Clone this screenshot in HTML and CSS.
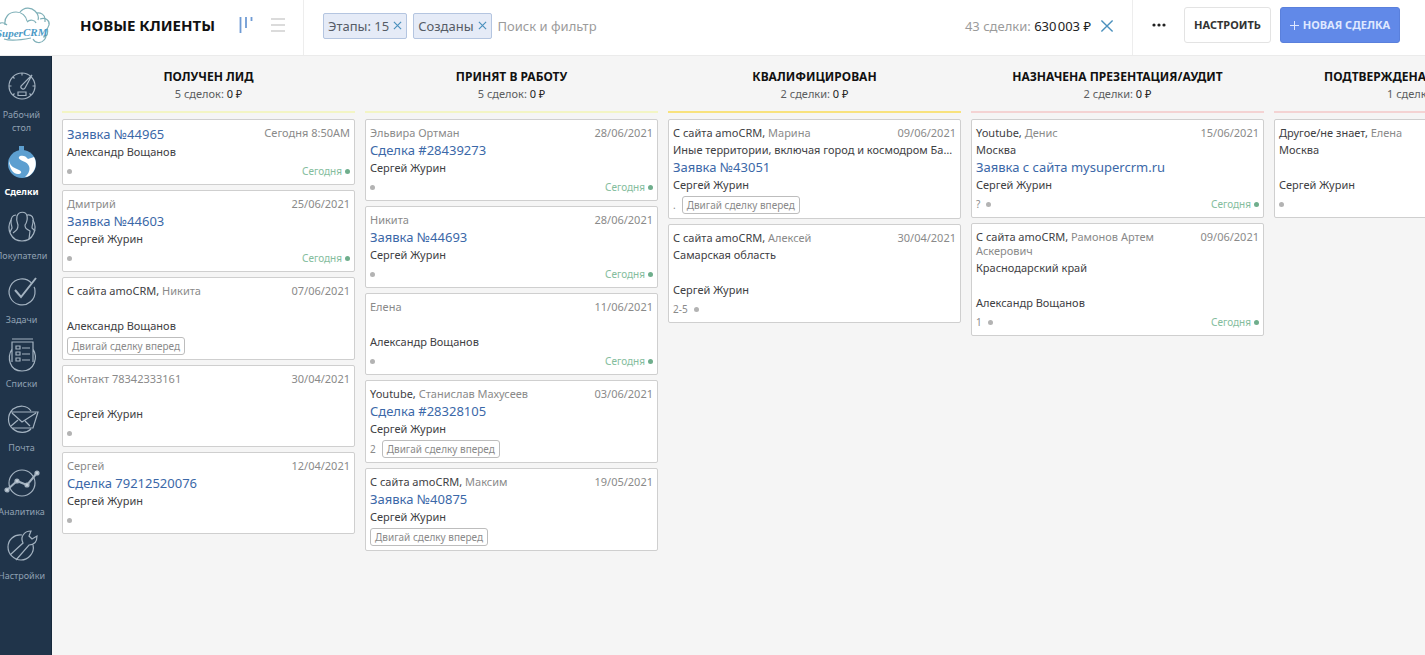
FILE: index.html
```html
<!DOCTYPE html>
<html lang="ru">
<head>
<meta charset="utf-8">
<title>Новые клиенты</title>
<link rel="stylesheet" href="styles.css">
</head>
<body>
<div class="app">
  <header class="topbar">
    <a class="logo" href="#" aria-label="Super CRM">
      <svg width="52" height="55" viewBox="0 0 52 55" fill="none" stroke-width="1.2">
        <g stroke="#7fb0b8">
          <path d="M-2 25C0 22 4 22 7 25M5 25C4 17 9 12 16 12c6 0 10 4 11 9"/>
          <path d="M20 12C24 7 31 7 35 11c3 3 4 6 3 9M36 13c5-1 9 2 9 6v3"/>
          <path d="M27 22c3-3 8-2 9 1M40 19c6-2 10 2 9 6-1 2-1 3-2 4"/>
          <path d="M47 28c2 5 0 9-4 9M33 39c2 4 8 5 11 1 3-3 2-4 1-5M4 39c6 2 17 1 27-1"/>
        </g>
        <text class="logo-text" x="-4" y="37">Super</text>
        <text class="logo-text" x="23" y="36">CRM</text>
      </svg>
    </a>
    <div class="title-area">
      <h1 class="title">НОВЫЕ КЛИЕНТЫ</h1>
      <button class="icon-btn" aria-label="Воронка">
        <svg width="14" height="16" viewBox="0 0 14 16" stroke="#6f9bd4" stroke-width="1.8"><path d="M1.500 0v16M7 0v11M12.500 0v4"/></svg>
      </button>
      <button class="icon-btn" aria-label="Список">
        <svg width="14" height="14" viewBox="0 0 14 14" stroke="#cfcfcf" stroke-width="1.4"><path d="M0 1h14M0 7h14M0 13h14"/></svg>
      </button>
    </div>
    <div class="search">
      <button class="chip">Этапы: 15<svg class="x" viewBox="0 0 10 10"><path d="M1 1l8 8M9 1L1 9"/></svg></button>
      <button class="chip">Созданы<svg class="x" viewBox="0 0 10 10"><path d="M1 1l8 8M9 1L1 9"/></svg></button>
      <input class="search-input" type="text" placeholder="Поиск и фильтр" aria-label="Поиск и фильтр">
      <span class="total">43 сделки: <b>630&#8202;003 ₽</b></span>
      <button class="icon-btn" aria-label="Сбросить"><svg class="x x-big" viewBox="0 0 10 10"><path d="M1 1l8 8M9 1L1 9"/></svg></button>
    </div>
    <div class="actions">
      <button class="icon-btn" aria-label="Ещё"><svg width="14" height="4" viewBox="0 0 14 4" fill="#222"><circle cx="2" cy="2" r="1.600"/><circle cx="7" cy="2" r="1.600"/><circle cx="12" cy="2" r="1.600"/></svg></button>
      <button class="btn">НАСТРОИТЬ</button>
      <button class="btn btn-primary"><svg width="9" height="9" viewBox="0 0 9 9" stroke="#dfe8ff"><path d="M4.500 0v9M0 4.500h9"/></svg>НОВАЯ СДЕЛКА</button>
    </div>
  </header>
  <div class="body">
    <nav class="sidebar">
      <a class="nav-item" href="#">
        <svg class="nav-icon" viewBox="0 0 36 34"><circle cx="18" cy="17" r="13"/><path d="M18 4v2.500M5 17h2.500M28.500 17H31M9 8l1.500 1.500M9 26l1.500-1.500M27 26l-1.500-1.500M28 6l-7 13c-1 2-5 1-4-2zM14 23h8v3.500h-8z"/></svg>
        <span>Рабочий<br>стол</span>
      </a>
      <a class="nav-item active" href="#">
        <svg class="nav-icon deals" viewBox="0 0 36 34"><path class="f-blue" d="M15 0h5v5h-5z"/><circle class="f-blue" cx="18" cy="18" r="14"/><path class="f-white" d="M30 11c3 5 2 11-1 15-2 3-5 5-8 5 6-5 6-12 0-15-5-2-8-4-5-6 3-1 6 0 8 3zM5 14c1 7 6 8 10 10 4 2 2 4-1 4-5 0-9-6-9-14z"/></svg>
        <span>Сделки</span>
      </a>
      <a class="nav-item" href="#">
        <svg class="nav-icon" viewBox="0 0 36 34"><path d="M13 6c2-5 9-5 10 0 1 4 0 6-2 9 0 3 1 4 5 6l-1 8M13 6c-1 4 0 6 1 9 0 4-1 5-5 8M12 5C8 5 7 9 7 12c0 3 1 4 1 6l-2 4M23 5c5-1 7 3 6 7 0 2-1 3-1 6l3 3"/><path d="M7 10c-5 9 0 21 11 21s16-12 11-21"/></svg>
        <span>Покупатели</span>
      </a>
      <a class="nav-item" href="#">
        <svg class="nav-icon" viewBox="0 0 36 34"><path d="M27.500 9A13 13 0 1 0 31 17c0-2 0-3-1-4"/><path class="thick" d="M11 16l6 7L32 4"/></svg>
        <span>Задачи</span>
      </a>
      <a class="nav-item" href="#">
        <svg class="nav-icon" viewBox="0 0 36 34"><path d="M8 1h21M8 24V4h21v20M8 11c-5 8-3 22 10 22s16-14 11-22M12 8h4v3h-4zM12 14h4v3h-4zM12 20h4v3h-4zM18 10h8M18 16h8M18 22h8"/></svg>
        <span>Списки</span>
      </a>
      <a class="nav-item" href="#">
        <svg class="nav-icon" viewBox="0 0 36 34"><path d="M27 9C23 3 15 3 9 7 3 13 3 22 9 27c6 5 14 4 18 0M6 10h28l-5 16H8M8 11l10 9 14-9M14 18l-7 6M21 19l5 5"/></svg>
        <span>Почта</span>
      </a>
      <a class="nav-item" href="#">
        <svg class="nav-icon" viewBox="0 0 36 34"><circle cx="18" cy="17" r="13"/><path class="thick" d="M3 24l10-9 10 4L33 7"/><g class="dots"><circle cx="3" cy="24" r="2"/><circle cx="13" cy="15" r="2"/><circle cx="23" cy="19" r="2"/><circle cx="33" cy="7" r="2"/></g></svg>
        <span>Аналитика</span>
      </a>
      <a class="nav-item" href="#">
        <svg class="nav-icon" viewBox="0 0 36 34"><path d="M18 5C10 4 4 10 4 17s6 13 13 13 14-7 12-15"/><path d="M6 25l13-12c-3-6 1-12 8-12l-2 5 3 3 5-3c0 6-3 9-8 9L12 30"/></svg>
        <span>Настройки</span>
      </a>
    </nav>
    <main class="board">
      <section class="column">
        <header class="col-head lime"><h2>ПОЛУЧЕН ЛИД</h2><p>5 сделок: <b>0 ₽</b></p></header>
        <article class="card">
          <div class="row"><a class="deal" href="#">Заявка №44965</a><time>Сегодня 8:50AM</time></div>
          <div class="person">Александр Вощанов</div>
          <footer><i class="dot"></i><span class="today">Сегодня</span></footer>
        </article>
        <article class="card">
          <div class="row"><span class="contact">Дмитрий</span><time>25/06/2021</time></div>
          <a class="deal" href="#">Заявка №44603</a>
          <div class="person">Сергей Журин</div>
          <footer><i class="dot"></i><span class="today">Сегодня</span></footer>
        </article>
        <article class="card">
          <div class="row"><span class="contact"><b>С сайта amoCRM,</b> Никита</span><time>07/06/2021</time></div>
          <div class="deal"></div>
          <div class="person">Александр Вощанов</div>
          <footer class="tagged"><span class="tag">Двигай сделку вперед</span></footer>
        </article>
        <article class="card">
          <div class="row"><span class="contact">Контакт 78342333161</span><time>30/04/2021</time></div>
          <div class="deal"></div>
          <div class="person">Сергей Журин</div>
          <footer><i class="dot"></i></footer>
        </article>
        <article class="card">
          <div class="row"><span class="contact">Сергей</span><time>12/04/2021</time></div>
          <a class="deal" href="#">Сделка 79212520076</a>
          <div class="person">Сергей Журин</div>
          <footer><i class="dot"></i></footer>
        </article>
      </section>
      <section class="column">
        <header class="col-head lime"><h2>ПРИНЯТ В РАБОТУ</h2><p>5 сделок: <b>0 ₽</b></p></header>
        <article class="card">
          <div class="row"><span class="contact">Эльвира Ортман</span><time>28/06/2021</time></div>
          <a class="deal" href="#">Сделка #28439273</a>
          <div class="person">Сергей Журин</div>
          <footer><i class="dot"></i><span class="today">Сегодня</span></footer>
        </article>
        <article class="card">
          <div class="row"><span class="contact">Никита</span><time>28/06/2021</time></div>
          <a class="deal" href="#">Заявка №44693</a>
          <div class="person">Сергей Журин</div>
          <footer><i class="dot"></i><span class="today">Сегодня</span></footer>
        </article>
        <article class="card">
          <div class="row"><span class="contact">Елена</span><time>11/06/2021</time></div>
          <div class="deal"></div>
          <div class="person">Александр Вощанов</div>
          <footer><i class="dot"></i><span class="today">Сегодня</span></footer>
        </article>
        <article class="card">
          <div class="row"><span class="contact"><b>Youtube,</b> Станислав Махусеев</span><time>03/06/2021</time></div>
          <a class="deal" href="#">Сделка #28328105</a>
          <div class="person">Сергей Журин</div>
          <footer class="tagged"><span>2</span><span class="tag">Двигай сделку вперед</span></footer>
        </article>
        <article class="card">
          <div class="row"><span class="contact"><b>С сайта amoCRM,</b> Максим</span><time>19/05/2021</time></div>
          <a class="deal" href="#">Заявка №40875</a>
          <div class="person">Сергей Журин</div>
          <footer class="tagged"><span class="tag">Двигай сделку вперед</span></footer>
        </article>
      </section>
      <section class="column">
        <header class="col-head yellow"><h2>КВАЛИФИЦИРОВАН</h2><p>2 сделки: <b>0 ₽</b></p></header>
        <article class="card">
          <div class="row"><span class="contact"><b>С сайта amoCRM,</b> Марина</span><time>09/06/2021</time></div>
          <div class="company">Иные территории, включая город и космодром Байконур</div>
          <a class="deal" href="#">Заявка №43051</a>
          <div class="person">Сергей Журин</div>
          <footer class="tagged"><span>.</span><span class="tag">Двигай сделку вперед</span></footer>
        </article>
        <article class="card">
          <div class="row"><span class="contact"><b>С сайта amoCRM,</b> Алексей</span><time>30/04/2021</time></div>
          <div class="company">Самарская область</div>
          <div class="deal"></div>
          <div class="person">Сергей Журин</div>
          <footer><span>2-5</span><i class="dot"></i></footer>
        </article>
      </section>
      <section class="column">
        <header class="col-head pink"><h2>НАЗНАЧЕНА ПРЕЗЕНТАЦИЯ/АУДИТ</h2><p>2 сделки: <b>0 ₽</b></p></header>
        <article class="card">
          <div class="row"><span class="contact"><b>Youtube,</b> Денис</span><time>15/06/2021</time></div>
          <div class="company">Москва</div>
          <a class="deal" href="#">Заявка с сайта mysupercrm.ru</a>
          <div class="person">Сергей Журин</div>
          <footer><span>?</span><i class="dot"></i><span class="today">Сегодня</span></footer>
        </article>
        <article class="card">
          <div class="row"><span class="contact"><b>С сайта amoCRM,</b> Рамонов Артем Аскерович</span><time>09/06/2021</time></div>
          <div class="company">Краснодарский край</div>
          <div class="deal"></div>
          <div class="person">Александр Вощанов</div>
          <footer><span>1</span><i class="dot"></i><span class="today">Сегодня</span></footer>
        </article>
      </section>
      <section class="column">
        <header class="col-head pink"><h2>ПОДТВЕРЖДЕНА ПРЕЗЕНТАЦИЯ</h2><p>1 сделка: <b>0 ₽</b></p></header>
        <article class="card">
          <div class="row"><span class="contact"><b>Другое/не знает,</b> Елена</span></div>
          <div class="company">Москва</div>
          <div class="deal"></div>
          <div class="person">Сергей Журин</div>
          <footer><i class="dot"></i></footer>
        </article>
      </section>
    </main>
  </div>
</div>
</body>
</html>
```

FILE: styles.css
```css
* { box-sizing: border-box; }
body {
  margin: 0;
  font: 12px/16px "Noto Sans", "Open Sans", sans-serif;
  color: #3e4043;
  background: #f5f5f5;
}
a { color: inherit; text-decoration: none; }
button, input { font: inherit; color: inherit; margin: 0; padding: 0; border: 0; background: none; }
button { cursor: pointer; }
svg { display: block; flex: none; }
h1, h2, p { margin: 0; }

.app { display: flex; flex-direction: column; min-height: 100vh; overflow: hidden; }

/* Top bar */
.topbar { display: flex; height: 56px; background: #fff; border-bottom: 1px solid #ebebeb; }
.logo { width: 52px; flex: none; }
.logo-text { font: italic bold 11px "Liberation Serif", serif; fill: #4c9ac6; }
.title-area {
  display: flex; align-items: center; gap: 18px; flex: none;
  width: 252px; padding: 0 18px 5px 28px; border-right: 1px solid #ededed;
}
.title { flex: 1; font-size: 15px; line-height: 20px; font-weight: 700; color: #111; white-space: nowrap; }
.icon-btn { display: flex; align-items: center; justify-content: center; }
.search { flex: 1; display: flex; align-items: center; gap: 6px; min-width: 0; padding: 0 18px 4px 19px; font-size: 13px; border-right: 1px solid #ededed; }
.chip {
  display: flex; align-items: center; gap: 4px; height: 26px; padding: 0 4px; white-space: nowrap;
  border: 1px solid #b4c5e0; border-radius: 2px; background: #e5ebf7; color: #555c66;
}
.x { width: 9px; height: 9px; stroke: #4a90bd; stroke-width: 1.3; fill: none; }
.x-big { width: 14px; height: 14px; stroke-width: 1; }
.search-input { flex: 1; min-width: 0; outline: 0; }
.search-input::placeholder { color: #9b9b9b; opacity: 1; }
.total { color: #9b9b9b; white-space: nowrap; margin-right: 3px; }
.total b { font-weight: 400; color: #222; }
.actions { display: flex; align-items: center; gap: 9px; padding: 0 25px 5px 19px; }
.actions .icon-btn { margin-right: 9px; }
.btn {
  display: flex; align-items: center; justify-content: center; gap: 4px; height: 36px; min-width: 87px;
  border: 1px solid #e3e3e3; border-radius: 3px; font-size: 11px; font-weight: 700; color: #333; white-space: nowrap;
}
.btn-primary { min-width: 120px; background: #6189e8; border-color: #5a80dc; color: #dfe8ff; }

/* Sidebar */
.body { flex: 1; display: flex; }
.sidebar {
  width: 52px; flex: none; display: flex; flex-direction: column; gap: 12px;
  padding: 13px 8px 0 0; background: #20344a; border-right: 1px solid #16283b;
}
.nav-item {
  display: flex; flex-direction: column; align-items: center; gap: 5px;
  font-size: 9px; line-height: 13px; text-align: center; white-space: nowrap; color: #8fa0b2;
}
.nav-icon { width: 36px; height: 34px; fill: none; stroke: #a3b2c0; stroke-width: 1.2; }
.thick { stroke-width: 2; }
.dots { fill: #c3ced8; }
.deals { stroke: none; }
.f-blue { fill: #5d9fd0; }
.f-white { fill: #fff; }
.active { color: #fff; font-weight: 700; }

/* Board */
.board { flex: 1; min-width: 0; display: flex; align-items: flex-start; gap: 10px; padding: 0 10px 20px; overflow: hidden; }
.column { flex: 0 0 293px; min-width: 0; display: flex; flex-direction: column; gap: 5px; }
.col-head { height: 57px; padding-top: 13px; margin-bottom: 1px; text-align: center; border-bottom: 2px solid; }
.col-head h2 { font-size: 12px; line-height: 16px; font-weight: 700; color: #111; white-space: nowrap; }
.col-head p { line-height: 18px; font-size: 11px; color: #5b5d60; }
.col-head b { font-weight: 400; color: #222; }
.lime { border-color: #f3f5c4; }
.yellow { border-color: #f8e27d; }
.pink { border-color: #f4d3d3; }

/* Deal card */
.card {
  display: flex; flex-direction: column; padding: 5px 4px 3px;
  background: #fff; border: 1px solid #cfcfcf; border-radius: 2px; font-size: 11px;
}
.row { display: flex; justify-content: space-between; gap: 20px; color: #8a8a8a; }
.contact { line-height: 14px; padding: 1px 0; max-width: 200px; }
.contact b { font-weight: 400; color: #3e4043; }
.company { line-height: 17px; overflow: hidden; white-space: nowrap; text-overflow: ellipsis; }
.deal { height: 18px; font-size: 13px; line-height: 18px; color: #3b68a8; white-space: nowrap; }
.person { line-height: 18px; }
.card footer { display: flex; align-items: center; gap: 6px; height: 20px; font-size: 10px; color: #8a8a8a; }
.card footer.tagged { height: 21px; }
.tag { padding: 0 4px; line-height: 16px; border: 1px solid #bdbdbd; border-radius: 3px; }
.dot { width: 5px; height: 5px; border-radius: 50%; background: #b3b3b3; }
.today { display: flex; align-items: center; gap: 3px; margin-left: auto; color: #84bd9d; }
.today::after { content: ""; width: 5px; height: 5px; border-radius: 50%; background: #6fae8c; }
```
